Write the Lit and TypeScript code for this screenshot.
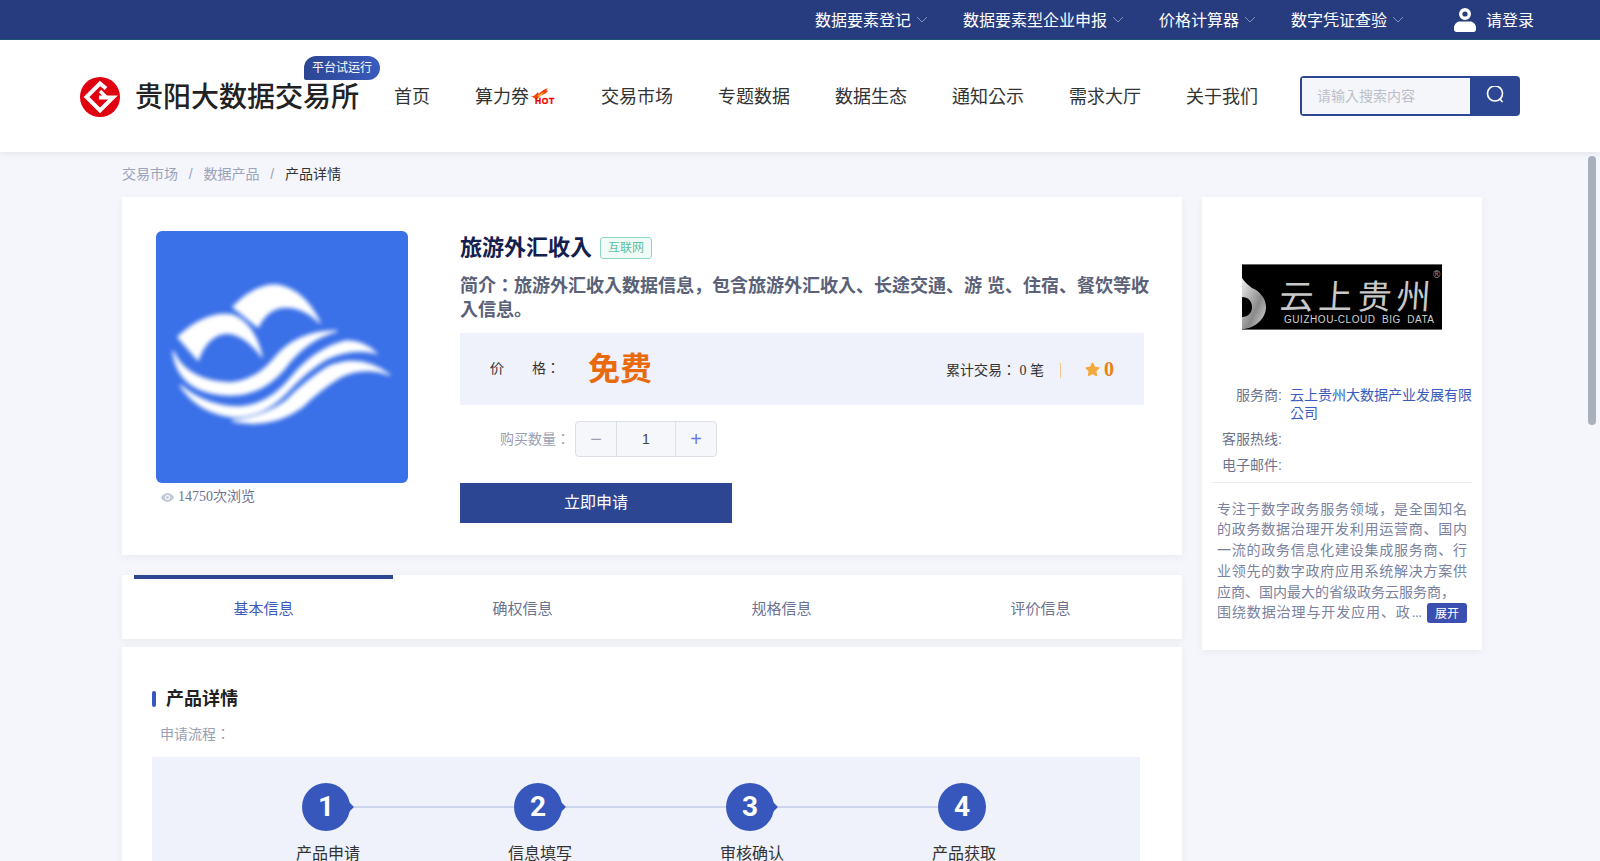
import { LitElement, html, css, svg } from 'lit';
import { customElement } from 'lit/decorators.js';

const chevron = html`<svg class="chev" width="12" height="7" viewBox="0 0 12 7"><path d="M1 1 6 6 11 1" fill="none" stroke="currentColor" stroke-width="1"/></svg>`;

const bookLogo = svg`
  <g fill="#fff" stroke="#fff" stroke-width="1.500" filter="url(#soft)">
    <path d="M22 106 Q50 80 76 84 Q98 92 106 126 Q90 104 72 102 Q52 102 42 129 Z"/>
    <path d="M77 76 Q98 54 120 54 Q148 58 164 92 Q148 76 130 76 Q112 76 102 96 Z"/>
    <path d="M17 120 Q30 150 74 152 Q100 150 118 128 Q140 100 181 100 Q150 108 128 138 Q105 165 72 164 Q22 162 17 120Z"/>
    <path d="M24 154 Q50 176 84 176 Q112 174 134 148 Q158 118 190 110 Q208 110 220 122 Q196 116 170 128 Q150 140 132 160 Q108 186 78 186 Q42 182 24 154Z"/>
    <path d="M76 190 Q108 186 130 170 Q150 150 172 136 Q204 122 234 144 Q208 134 184 146 Q164 158 146 176 Q116 198 76 190Z"/>
  </g>`;

@customElement('app-root')
export class AppRoot extends LitElement {

  static styles = css`
    :host{
      display:block;
      position:relative;
      height:100vh;
      overflow:hidden;
      background:#f5f6fb;
      font-family:"Liberation Sans","Noto Sans CJK KR",sans-serif;
      color:#333
    }
    .topbar{
      height:39px;
      border-bottom:1px solid #1f5578;
      background:#273c7e;
      color:#fff;
      display:flex;
      justify-content:flex-end;
      align-items:center;
      padding-right:66px;
      font-size:16px
    }
    .topbar .item{
      display:flex;
      align-items:center;
      margin-left:35px;
      padding-bottom:2px
    }
    .chev{
      margin-left:5px;
      margin-top:2px;
      color:#8391bb
    }
    .user{
      display:flex;
      align-items:center;
      margin-left:50px;
      gap:10px
    }
    .user span{
      padding-bottom:2px
    }
    .header{
      position:relative;
      z-index:2;
      height:112px;
      background:#fff;
      box-shadow:0 2px 6px rgba(0,0,0,.07);
      display:flex;
      align-items:center;
      padding-left:80px
    }
    .brand{
      position:relative;
      display:flex;
      align-items:center;
      width:315px;
      margin-top:2px
    }
    .brand h1{
      margin:0 0 0 15px;
      padding-bottom:4px;
      font-size:28px;
      font-weight:500;
      color:#222;
      white-space:nowrap
    }
    .beta{
      position:absolute;
      left:224px;
      top:-19px;
      width:76px;
      height:24px;
      line-height:24px;
      text-align:center;
      border-radius:12px 12px 12px 2px;
      background:linear-gradient(90deg,#2c4693,#3a5bbd);
      color:#fff;
      font-size:12px
    }
    .nav{
      display:flex;
      align-items:center;
      gap:45px;
      font-size:18px;
      color:#333;
      width:905px;
      margin-left:-1px;
      margin-right:1px;
      padding-bottom:3px
    }
    .nav span{
      display:flex;
      align-items:center;
      white-space:nowrap
    }
    .hot{
      margin-left:1px;
      margin-top:3px
    }
    .search{
      width:220px;
      height:40px;
      box-sizing:border-box;
      border:2px solid #2c4693;
      border-radius:4px;
      display:flex;
      background:#2c4693
    }
    .search .field{
      width:168px;
      background:#f5f6fa;
      color:#bcbfcb;
      font-size:14px;
      line-height:36px;
      padding-left:15px;
      box-sizing:border-box
    }
    .search .btn{
      flex:1;
      display:flex;
      align-items:center;
      justify-content:center
    }
    .page{
      display:flex;
      gap:20px;
      padding-left:122px
    }
    .left{
      width:1060px
    }
    .crumb{
      height:45px;
      line-height:45px;
      font-size:14px;
      color:#9aa3bb;
      white-space:nowrap
    }
    .crumb i{
      font-style:normal;
      margin:0 10.8px
    }
    .crumb b{
      font-weight:400;
      color:#333
    }
    .card{
      background:#fff;
      box-shadow:0 2px 8px rgba(0,0,0,.05)
    }
    .product{
      height:358px;
      box-sizing:border-box;
      padding:34px;
      display:flex;
      gap:52px
    }
    .pic{
      width:252px;
      height:252px;
      border-radius:6px;
      background:#3a70e8;
      display:block
    }
    .views{
      display:flex;
      align-items:center;
      gap:4px;
      margin:5px 0 0 5px;
      font-family:"Liberation Serif","Noto Sans CJK KR",serif;
      font-size:14px;
      line-height:18px;
      color:#6b7390
    }
    .info{
      width:700px;
      flex:none
    }
    .title{
      display:flex;
      align-items:center;
      height:32px;
      gap:8px
    }
    .title h2{
      margin:0;
      padding-bottom:4px;
      font-size:22px;
      font-weight:700;
      color:#14204e
    }
    .tag{
      width:52px;
      height:22px;
      margin-top:2px;
      box-sizing:border-box;
      border:1px solid #8fd6c0;
      border-radius:3px;
      background:#f1fbf8;
      color:#5cc0a0;
      font-size:12px;
      line-height:20px;
      text-align:center
    }
    .desc{
      margin:11px 0 0;
      font-size:18px;
      font-weight:700;
      line-height:24px;
      color:#5b6278
    }
    .price{
      margin-top:11px;
      width:684px;
      height:72px;
      background:#eff2fb;
      display:flex;
      align-items:center;
      padding:0 30px;
      box-sizing:border-box;
      font-family:"Liberation Serif","Noto Sans CJK KR",serif;
      font-size:14px
    }
    .price .k{
      width:98px;
      padding-bottom:4px;
      white-space:pre
    }
    .price .free{
      padding-bottom:6px;
      font-family:"Liberation Sans","Noto Sans CJK KR",sans-serif;
      font-size:32px;
      font-weight:700;
      color:#e96a0c
    }
    .stats{
      margin-left:auto;
      display:flex;
      align-items:center
    }
    .stats .sep{
      width:1px;
      height:15px;
      margin:3px 24px 0 16px;
      background:#f5c78e
    }
    .stats strong{
      margin-left:4px;
      font-size:20px;
      color:#e8830f
    }
    .qty{
      margin-top:16px;
      display:flex;
      align-items:center;
      padding-left:40px;
      font-size:14px;
      color:#9aa0b4
    }
    .qty label{
      padding-bottom:2px
    }
    .stepper{
      display:flex;
      margin-left:5px;
      width:142px;
      height:36px;
      box-sizing:border-box;
      border:1px solid #dcdfe6;
      border-radius:4px;
      background:#f6f7fb
    }
    .stepper span{
      width:40px;
      display:flex;
      align-items:center;
      justify-content:center;
      font-size:20px;
      color:#9aa0ad
    }
    .stepper .plus{
      color:#6a7ae8
    }
    .stepper .n{
      flex:1;
      border:solid #dcdfe6;
      border-width:0 1px;
      font-size:14px;
      color:#444
    }
    .apply{
      margin-top:26px;
      width:272px;
      height:40px;
      line-height:40px;
      text-align:center;
      background:#2c4693;
      color:#fff;
      font-size:16px
    }
    .tabs{
      margin-top:20px;
      height:64px;
      padding:0 12px;
      display:flex
    }
    .tabs div{
      flex:1;
      box-sizing:border-box;
      border-top:4px solid transparent;
      line-height:60px;
      text-align:center;
      font-size:15px;
      color:#6b7390
    }
    .tabs .on{
      border-top-color:#2c4693;
      color:#3a5bbd
    }
    .detail{
      margin-top:8px;
      height:400px;
      padding:40px 30px 0
    }
    .detail h3{
      margin:0;
      display:flex;
      align-items:center;
      gap:10px;
      font-size:18px;
      font-weight:700;
      line-height:24px;
      color:#222
    }
    .detail h3::before{
      content:"";
      width:4px;
      height:16px;
      border-radius:2px;
      background:#3a57c0
    }
    .sub{
      margin:13px 0 13px 8px;
      font-size:14px;
      line-height:20px;
      color:#9aa0b4
    }
    .flow{
      width:988px;
      height:200px;
      box-sizing:border-box;
      padding:26px 0 0 150px;
      background:#eff2fb;
      display:flex
    }
    .step{
      width:212px;
      flex:none
    }
    .node{
      display:flex;
      align-items:center;
      height:48px
    }
    .dot{
      position:relative;
      width:48px;
      height:48px;
      border-radius:50%;
      background:#3757bd;
      color:#fff;
      font-family:Roboto,sans-serif;
      font-size:28px;
      font-weight:700;
      text-align:center;
      line-height:48px;
      flex:none
    }
    .dot::after{
      content:"";
      position:absolute;
      right:-4px;
      top:19px;
      border:5px solid transparent;
      border-left-color:#3757bd;
      border-right-width:0
    }
    .step:last-child .dot::after{
      display:none
    }
    .line{
      flex:1;
      height:2px;
      margin-left:4px;
      background:#cdd5ee
    }
    .step p{
      margin:11px 0 0 -6px;
      width:64px;
      font-size:16px;
      line-height:24px;
      white-space:nowrap;
      color:#333
    }
    .side{
      margin-top:45px;
      width:280px;
      height:453px;
      box-sizing:border-box;
      padding-top:67px
    }
    .side .mark{
      display:block;
      margin:0 auto 56px;
      background:#000
    }
    .row{
      display:flex;
      font-size:14px;
      line-height:18px;
      color:#6b7390;
      margin-bottom:8px
    }
    .row label{
      width:80px;
      flex:none;
      text-align:right;
      margin-right:8px
    }
    .row a{
      width:182px;
      color:#3a5bbd
    }
    .side hr{
      margin:2px 10px 0;
      border:0;
      border-top:1px solid #e8e9ee
    }
    .about{
      margin:15.5px 15px 0;
      font-size:14px;
      line-height:20.8px;
      color:#7a82a0
    }
    .about p{
      margin:0;
      text-align:justify
    }
    .about .last{
      display:flex;
      align-items:center;
      justify-content:space-between;
      white-space:nowrap;
      letter-spacing:.9px
    }
    .about .dots{
      margin-left:1px;
      letter-spacing:-.6px
    }
    .about button{
      width:40px;
      height:20px;
      padding:0;
      border:0;
      border-radius:3px;
      background:#3b4fb0;
      color:#fff;
      font:12px "Liberation Sans","Noto Sans CJK KR",sans-serif;
      letter-spacing:0
    }
    .thumb{
      position:absolute;
      z-index:3;
      right:4px;
      top:156px;
      width:8px;
      height:269px;
      border-radius:4px;
      background:#a9b0bb
    }
  `;

  topLinks = ['数据要素登记', '数据要素型企业申报', '价格计算器', '数字凭证查验'];
  navLinks = ['交易市场', '专题数据', '数据生态', '通知公示', '需求大厅', '关于我们'];
  tabs = ['基本信息', '确权信息', '规格信息', '评价信息'];
  steps = ['产品申请', '信息填写', '审核确认', '产品获取'];

  render() {
    return html`
      <div class="topbar">
        ${this.topLinks.map(t => html`<div class="item">${t}${chevron}</div>`)}
        <div class="user">
          <svg width="22" height="24" viewBox="0 0 22 24" fill="#fff">
            <path fill-rule="evenodd" d="M11 0a6 6 0 1 1 0 12 6 6 0 0 1 0-12Zm0 3.400a2.600 2.600 0 1 0 0 5.200 2.600 2.600 0 0 0 0-5.200Z"/>
            <path d="M0 20c0-4 3-6.500 6-6.500h10c3 0 6 2.500 6 6.500v1.500c0 1.500-1 2.500-2.500 2.500h-17C1 24 0 23 0 21.500Z"/>
          </svg>
          <span>请登录</span>
        </div>
      </div>

      <div class="header">
        <div class="brand">
          <svg width="40" height="40" viewBox="0 0 40 40">
            <circle cx="20" cy="20" r="20" fill="#e0000f"/>
            <path d="M26 11.500 20 6.500 6.500 20 20 33.500 33 20.500 19 20.500" fill="none" stroke="#fff" stroke-width="4"/>
            <path d="M20 14 26 20" fill="none" stroke="#fff" stroke-width="3.500"/>
          </svg>
          <h1>贵阳大数据交易所</h1>
          <div class="beta">平台试运行</div>
        </div>
        <div class="nav">
          <span>首页</span>
          <span>算力券
            <svg class="hot" width="26" height="16" viewBox="0 0 26 16">
              <path d="M0 8 C4 9 5 7 8 4 C8 6 9 6 12 3 C13 2 15 1 18 0 C16 2 16 3 18 3 C17 5 14 6 12 7 C9 8 8 11 6 12 C5 10 3 9 0 8Z" fill="#f0440c"/>
              <path d="M7 8 C9 7 11 5 14 4 C13 6 11 7 10 9Z" fill="#ffb02a"/>
              <text x="5" y="15.500" font-family="Liberation Sans" font-weight="700" font-size="8.500" letter-spacing=".6" stroke="#f00000" stroke-width=".3" fill="#f00000">HOT</text>
            </svg>
          </span>
          ${this.navLinks.map(t => html`<span>${t}</span>`)}
        </div>
        <div class="search">
          <div class="field">请输入搜索内容</div>
          <div class="btn">
            <svg width="20" height="20" viewBox="0 0 20 20" fill="none" stroke="#fff" stroke-width="1.700">
              <circle cx="11" cy="7.500" r="7.500"/>
              <path d="M16 13 18 15.500" stroke-linecap="round"/>
            </svg>
          </div>
        </div>
      </div>

      <div class="page">
        <div class="left">
          <div class="crumb">交易市场<i>/</i>数据产品<i>/</i><b>产品详情</b></div>

          <div class="card product">
            <div>
              <svg class="pic" viewBox="0 0 252 252">
                <defs><filter id="soft"><feGaussianBlur stdDeviation="2.200"/></filter></defs>
                ${bookLogo}
              </svg>
              <div class="views">
                <svg width="13" height="9" viewBox="0 0 13 9">
                  <path fill-rule="evenodd" fill="#c3c8d6" d="M6.500 0C9.500 0 12 2.200 13 4.500 12 6.800 9.500 9 6.500 9S1 6.800 0 4.500C1 2.200 3.500 0 6.500 0Zm0 2a2.500 2.500 0 1 0 0 5 2.500 2.500 0 0 0 0-5Z"/>
                  <circle cx="6.500" cy="4.500" r="1.400" fill="#c3c8d6"/>
                </svg>
                14750次浏览
              </div>
            </div>
            <div class="info">
              <div class="title">
                <h2>旅游外汇收入</h2>
                <div class="tag">互联网</div>
              </div>
              <p class="desc">简介：旅游外汇收入数据信息，包含旅游外汇收入、长途交通、游 览、住宿、餐饮等收入信息。</p>
              <div class="price">
                <span class="k">价        格：</span>
                <span class="free">免费</span>
                <div class="stats">
                  累计交易： 0 笔
                  <span class="sep"></span>
                  <svg width="15" height="15" viewBox="0 0 24 24" fill="#f5a93b" stroke="#f5a93b" stroke-width="2.500" stroke-linejoin="round"><path d="m12 2 3 6.600 7 .9-5.100 4.900 1.300 7.100L12 18l-6.200 3.500 1.300-7.100L2 9.500l7-.9Z"/></svg>
                  <strong>0</strong>
                </div>
              </div>
              <div class="qty">
                <label>购买数量：</label>
                <div class="stepper">
                  <span>−</span>
                  <span class="n">1</span>
                  <span class="plus">+</span>
                </div>
              </div>
              <div class="apply">立即申请</div>
            </div>
          </div>

          <div class="card tabs">
            ${this.tabs.map((t, i) => html`<div class=${i === 0 ? 'on' : ''}>${t}</div>`)}
          </div>

          <div class="card detail">
            <h3>产品详情</h3>
            <div class="sub">申请流程：</div>
            <div class="flow">
              ${this.steps.map((t, i) => html`
                <div class="step">
                  <div class="node">
                    <div class="dot">${i + 1}</div>
                    ${i < 3 ? html`<div class="line"></div>` : ''}
                  </div>
                  <p>${t}</p>
                </div>
              `)}
            </div>
          </div>
        </div>

        <div class="card side">
          <svg class="mark" width="200" height="66" viewBox="0 0 200 66">
            <defs><linearGradient id="ring" x1="0" y1="0" x2="1" y2="1"><stop offset="0" stop-color="#eee"/><stop offset=".6" stop-color="#8a8a8a"/><stop offset="1" stop-color="#ddd"/></linearGradient></defs>
            <rect width="200" height="1" fill="#666"/>
            <rect y="65" width="200" height="1" fill="#666"/>
            <path fill="url(#ring)" fill-rule="evenodd" d="M0 14 C4 20 8 22 10 24 C18 27 24 35 24 43 C24 55 12 65 0 65 V53 C6 53 10 49 10 43 C10 37 6 33 0 33Z"/>
            <text x="37" y="45" font-family="Noto Sans CJK KR" font-size="34" font-weight="400" letter-spacing="5" fill="#c8c8c8" transform="skewX(-4) translate(3 0)">云上贵州</text>
            <text x="42" y="59" font-family="Liberation Sans" font-size="10" letter-spacing=".55" word-spacing="3" fill="#d0d0d0">GUIZHOU-CLOUD BIG DATA</text>
            <text x="191" y="14" font-family="Liberation Sans" font-size="10" fill="#999">®</text>
          </svg>
          <div class="row"><label>服务商:</label><a>云上贵州大数据产业发展有限公司</a></div>
          <div class="row"><label>客服热线:</label></div>
          <div class="row"><label>电子邮件:</label></div>
          <hr />
          <div class="about">
            <p>专注于数字政务服务领域，是全国知名的政务数据治理开发利用运营商、国内一流的政务信息化建设集成服务商、行业领先的数字政府应用系统解决方案供应商、国内最大的省级政务云服务商，</p>
            <div class="last"><span>围绕数据治理与开发应用、政<span class="dots">...</span></span><button>展开</button></div>
          </div>
        </div>
      </div>

      <div class="thumb"></div>
    `;
  }

}
